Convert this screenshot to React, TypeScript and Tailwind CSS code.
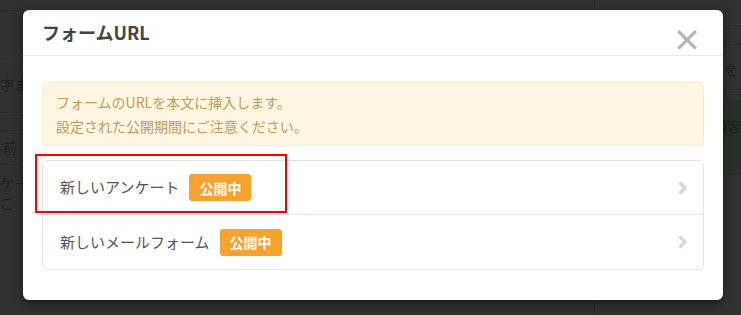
import React from "react";

const jp = { fontFamily: '"Noto Sans CJK JP", "Noto Sans", sans-serif' };

const Badge = () => (
  <span className="inline-flex items-center justify-center h-[27px] px-[10px] rounded-[3px] bg-[#f9a22b] text-white text-[14px] font-bold leading-none">
    公開中
  </span>
);

const Chevron = () => (
  <svg width="9" height="14" viewBox="0 0 9 14" className="text-[#d6d6d6]">
    <path d="M1.5 1.5 L7 7 L1.5 12.5" fill="none" stroke="currentColor" strokeWidth="3.2" />
  </svg>
);

const FormRow = ({ label, last }: { label: string; last?: boolean }) => (
  <div className={`flex items-center h-[54px] pl-[17px] pr-[16px] ${last ? "" : "border-b border-[#e3e3e3]"}`}>
    <span className="text-[15px] text-[#555]">{label}</span>
    <span className="ml-[10px]">
      <Badge />
    </span>
    <span className="ml-auto flex items-center">
      <Chevron />
    </span>
  </div>
);

const Backdrop = () => (
  <div className="flex h-full text-[#1d1d1d] text-[14px] whitespace-nowrap">
    <div className="w-[602px] border-r border-[#2a2a2a] flex flex-col">
      <div className="h-[11px] border-b border-[#2a2a2a]" />
      <div className="h-[46px] border-b border-[#363636]" />
      <div className="h-[56px] flex items-center border-b border-[#2a2a2a]">字ま</div>
      <div className="h-[18px] border-b border-[#2a2a2a]" />
      <div className="h-[34px] flex items-center pl-[3px] border-b border-[#2a2a2a]">前</div>
      <div className="pt-[8px] flex flex-col leading-[20px]">
        <span>ケー</span>
        <span>こ</span>
      </div>
    </div>
    <div className="flex-1 flex flex-col">
      <div className="h-[25px] border-b border-dotted border-[#3c3c3c]" />
      <div className="h-[20px] border-b border-[#2a2a2a]" />
      <div className="h-[50px] flex items-center pl-[115px] border-b border-[#2a2a2a]">求を</div>
      <div className="h-[5px]" />
      <div className="h-[75px] bg-[#2a2e29] pl-[118px] pt-[16px]">顧客</div>
    </div>
  </div>
);

export default function App() {
  return (
    <div className="relative w-[741px] h-[315px] bg-[#313131] overflow-hidden" style={jp}>
      <Backdrop />

      <div className="absolute left-[23px] top-[10px] w-[700px] h-[290px] bg-white rounded-[6px] shadow-[0_3px_9px_rgba(0,0,0,0.5)]">
        <div className="flex items-center h-[46px] px-[19px] border-b border-[#e8e8e8]">
          <h3 className="text-[18px] font-bold text-[#444]">フォームURL</h3>
          <span className="ml-auto mt-[10px] mr-[2px] text-[#b5b5b5] text-[30px] font-bold leading-none">×</span>
        </div>

        <div className="px-[19px] pt-[26px] pb-[32px]">
          <div className="border border-[#faebcc] bg-[#fcf6e2] rounded-[4px] px-[13px] py-[7px] text-[14px] leading-[24px] text-[#c49a57]">
            <p>フォームのURLを本文に挿入します。</p>
            <p>設定された公開期間にご注意ください。</p>
          </div>

          <div className="mt-[14px] border border-[#e3e3e3] rounded-[6px]">
            <FormRow label="新しいアンケート" />
            <FormRow label="新しいメールフォーム" last />
          </div>
        </div>
      </div>

      <div className="absolute left-[35px] top-[154px] w-[252px] h-[59px] border-2 border-[#ff0000]" />
    </div>
  );
}
